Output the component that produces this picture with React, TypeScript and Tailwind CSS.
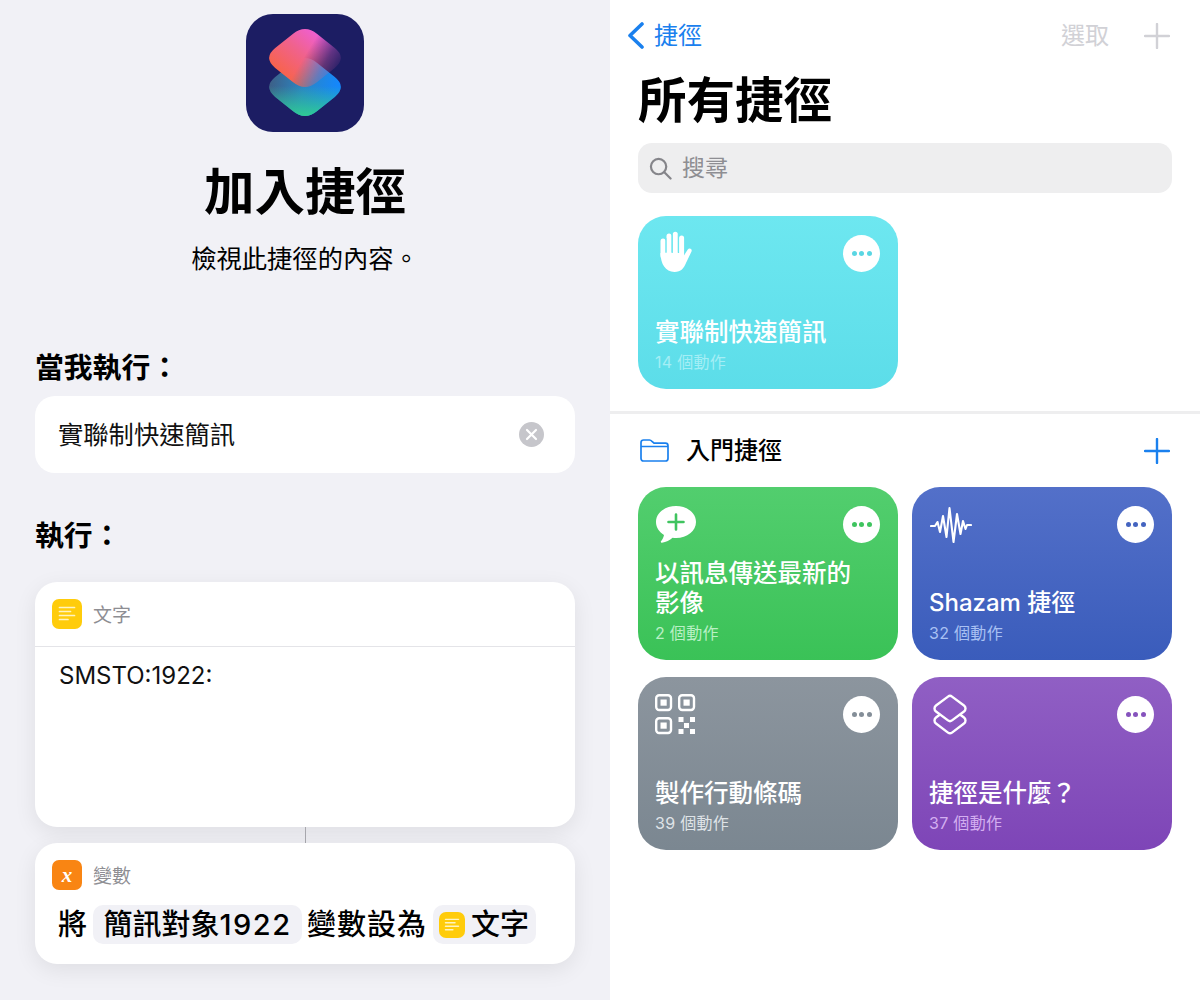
import React from "react";

const FONT = "font-['Inter','Noto_Sans_CJK_TC',sans-serif]";

const DIAMOND =
  "M46.8 19.9Q59 10 71.2 19.9L88.8 34.1Q101 44 88.8 53.9L71.2 68.1Q59 78 46.8 68.1L29.2 53.9Q17 44 29.2 34.1Z";
const DIAMOND_LOW =
  "M46.8 48.9Q59 39 71.2 48.9L88.8 63.1Q101 73 88.8 82.9L71.2 97.1Q59 107 46.8 97.1L29.2 82.9Q17 73 29.2 63.1Z";

function AppIcon() {
  return (
    <div className="w-[118px] h-[118px] rounded-[27px] bg-[#1c1d63] overflow-hidden">
      <svg width="118" height="118" viewBox="0 0 118 118">
        <defs>
          <linearGradient id="botA" gradientUnits="userSpaceOnUse" x1="24" y1="62" x2="92" y2="70">
            <stop offset="0" stopColor="#3d5f86" />
            <stop offset="0.5" stopColor="#2a86c4" />
            <stop offset="1" stopColor="#1587fb" />
          </linearGradient>
          <linearGradient id="botB" gradientUnits="userSpaceOnUse" x1="59" y1="72" x2="59" y2="102">
            <stop offset="0" stopColor="#2fc79a" stopOpacity="0" />
            <stop offset="1" stopColor="#2fcb93" stopOpacity="1" />
          </linearGradient>
          <linearGradient id="topA" gradientUnits="userSpaceOnUse" x1="32" y1="58" x2="68" y2="16">
            <stop offset="0" stopColor="#f8634a" />
            <stop offset="0.55" stopColor="#f0628e" />
            <stop offset="1" stopColor="#ef5fd2" />
          </linearGradient>
          <linearGradient id="fade" gradientUnits="userSpaceOnUse" x1="60" y1="40" x2="90" y2="58">
            <stop offset="0" stopColor="#fff" />
            <stop offset="0.6" stopColor="#555" />
            <stop offset="1" stopColor="#111" />
          </linearGradient>
          <mask id="topMask" maskUnits="userSpaceOnUse" x="0" y="0" width="118" height="118">
            <rect width="118" height="118" fill="url(#fade)" />
          </mask>
        </defs>
        <path d={DIAMOND_LOW} fill="url(#botA)" />
        <path d={DIAMOND_LOW} fill="url(#botB)" />
        <path d={DIAMOND} fill="url(#topA)" mask="url(#topMask)" />
      </svg>
    </div>
  );
}

function NotesGlyph({ size }: { size: number }) {
  return (
    <div
      className="bg-[#ffcc0b] flex items-center justify-center shrink-0 rounded-[7px]"
      style={{ width: size, height: size }}
    >
      <svg width={size} height={size} viewBox="0 0 30 30">
        <g stroke="#fff4c2" strokeWidth="1.7" strokeLinecap="round">
          <path d="M7.5 8.5H22.5" />
          <path d="M7.5 12.5H18.5" />
          <path d="M7.5 16.5H22.5" />
          <path d="M7.5 20.5H16" />
        </g>
      </svg>
    </div>
  );
}

function Plus({ color, size = 26 }: { color: string; size?: number }) {
  return (
    <svg width={size} height={size} viewBox="0 0 26 26" className="shrink-0">
      <path d="M13 1V25M1 13H25" stroke={color} strokeWidth="2.4" strokeLinecap="round" />
    </svg>
  );
}

function Dots({ color }: { color: string }) {
  return (
    <div className="w-[37px] h-[37px] rounded-full bg-white flex items-center justify-center gap-[2.5px] shrink-0 mt-[1px]">
      <span className="w-[5px] h-[5px] rounded-full" style={{ background: color }} />
      <span className="w-[5px] h-[5px] rounded-full" style={{ background: color }} />
      <span className="w-[5px] h-[5px] rounded-full" style={{ background: color }} />
    </div>
  );
}

function HandIcon() {
  return (
    <svg width="42" height="42" viewBox="0 0 42 42">
      <path
        d="M5.5 22C5.5 32 10 41 19.5 41C26 41 29 37 31 32L36.5 20.5C37.6 18 34.2 16.4 32.6 18.8L29 24.5V22H5.5Z"
        fill="#fff"
      />
      <g stroke="#fff" strokeWidth="5" strokeLinecap="round">
        <path d="M8 25V10" />
        <path d="M14 25V5" />
        <path d="M20.3 25V3.2" />
        <path d="M26.6 27V7" />
      </g>
      <g stroke="#6ce6ef" strokeWidth="0.9">
        <path d="M11 7V21" />
        <path d="M17.1 3V21" />
        <path d="M23.4 3V21" />
      </g>
    </svg>
  );
}

function BubbleIcon() {
  return (
    <svg width="42" height="40" viewBox="0 0 42 40">
      <path
        d="M21 1C9.7 1 1 8 1 17C1 22.6 4.3 27.2 9 29.9C8.6 32.4 7.3 34.6 6 36.2C5.5 37 6 37.9 7 37.7C11 37.1 14.8 35.3 17.6 32.8C18.7 33 19.8 33 21 33C32.3 33 41 25.8 41 17C41 8 32.3 1 21 1Z"
        fill="#fff"
      />
      <path d="M21 9.5V24.5M13.5 17H28.5" stroke="#3fc45f" strokeWidth="2.6" strokeLinecap="round" />
    </svg>
  );
}

function WaveIcon() {
  return (
    <svg width="42" height="40" viewBox="0 0 42 40">
      <path
        d="M1 21H5L7.5 17L10 27L13 11L16.5 32L19.5 3L23.5 37L27 9L30.5 29L33 16L35.5 24L37 20H41"
        fill="none"
        stroke="#fff"
        strokeWidth="2.1"
        strokeLinecap="round"
        strokeLinejoin="round"
      />
    </svg>
  );
}

function QrIcon() {
  const Box = ({ x, y }: { x: number; y: number }) => (
    <g>
      <rect x={x + 1.2} y={y + 1.2} width="14.8" height="14.8" rx="3" fill="none" stroke="#fff" strokeWidth="2.4" />
      <rect x={x + 5.5} y={y + 5.5} width="6.2" height="6.2" fill="#fff" />
    </g>
  );
  return (
    <svg width="42" height="42" viewBox="0 0 42 42">
      <Box x={0} y={0} />
      <Box x={23} y={0} />
      <Box x={0} y={23} />
      <g fill="#fff">
        <rect x="23.5" y="23" width="5" height="5" />
        <rect x="35" y="23" width="5" height="5" />
        <rect x="29" y="29" width="5" height="5" />
        <rect x="23.5" y="35" width="5" height="5" />
        <rect x="35" y="35" width="5" height="5" />
      </g>
    </svg>
  );
}

function LayersIcon() {
  return (
    <svg width="42" height="42" viewBox="0 0 42 42" fill="none" stroke="#fff" strokeWidth="2.4" strokeLinejoin="round">
      <path d="M19 2.6C20.2 1.7 21.8 1.7 23 2.6L35 11.5C37 13 37 16 35 17.5L23 26.4C21.8 27.3 20.2 27.3 19 26.4L7 17.5C5 16 5 13 7 11.5L19 2.6Z" />
      <path d="M11 20.5L7 23.5C5 25 5 28 7 29.5L19 38.6C20.2 39.5 21.8 39.5 23 38.6L35 29.5C37 28 37 25 35 23.5L31 20.5" />
    </svg>
  );
}

function ShortcutCard({
  bg,
  icon,
  title,
  sub,
  subColor,
  dot,
  iconPad,
  titleSize = "text-[24.5px]",
}: {
  bg: string;
  icon: React.ReactNode;
  title: React.ReactNode;
  sub: string;
  subColor: string;
  dot: string;
  iconPad: string;
  titleSize?: string;
}) {
  return (
    <div className={`h-[173px] rounded-[28px] pl-[17px] pr-[18px] pt-[18px] pb-[16px] flex flex-col justify-between ${bg}`}>
      <div className="flex justify-between items-start h-[42px]">
        <div className={iconPad}>{icon}</div>
        <Dots color={dot} />
      </div>
      <div>
        <div className={`${titleSize} leading-[30px] font-medium text-white`}>{title}</div>
        <div className={`text-[16px] leading-[22px] mt-[4px] tracking-[0.3px] ${subColor}`}>{sub}</div>
      </div>
    </div>
  );
}

export default function App() {
  return (
    <div className={`w-[1200px] h-[1000px] flex overflow-hidden bg-white ${FONT}`}>
      {/* Left */}
      <div className="w-[610px] h-full bg-[#f1f1f6] flex flex-col items-stretch pt-[14px] px-[35px]">
        <div className="flex flex-col items-center">
          <AppIcon />
          <h1 className="text-[50.5px] leading-[60px] font-bold text-black mt-[30px]">加入捷徑</h1>
          <p className="text-[25.3px] leading-[32px] text-black mt-[21px]">檢視此捷徑的內容。</p>
        </div>
        <div className="text-[28.8px] leading-[36px] font-semibold text-black mt-[75px]">當我執行：</div>
        <div className="h-[77px] rounded-[20px] bg-white mt-[10px] flex items-center justify-between pl-[23px] pr-[31px] shrink-0">
          <span className="text-[25.3px] text-[#111]">實聯制快速簡訊</span>
          <span className="w-[25px] h-[25px] rounded-full bg-[#c6c6cb] flex items-center justify-center">
            <svg width="13" height="13" viewBox="0 0 13 13">
              <path d="M2 2L11 11M11 2L2 11" stroke="#fff" strokeWidth="2.2" strokeLinecap="round" />
            </svg>
          </span>
        </div>
        <div className="text-[28.8px] leading-[36px] font-semibold text-black mt-[45px]">執行：</div>
        <div className="h-[245px] rounded-[22px] bg-white mt-[28px] shadow-[0_6px_22px_rgba(0,0,0,0.08)] shrink-0">
          <div className="h-[65px] border-b border-[#e4e4e8] pl-[17px] flex items-center gap-[11px]">
            <NotesGlyph size={30} />
            <span className="text-[19px] text-[#8e8e93] pt-[4px]">文字</span>
          </div>
          <div className="pl-[24px] pt-[12px] text-[24px] leading-[33px] text-[#111]">SMSTO:1922:</div>
        </div>
        <div className="h-[16px] w-px bg-[#a8a8ae] mx-auto shrink-0"></div>
        <div className="h-[121px] rounded-[22px] bg-white shadow-[0_6px_22px_rgba(0,0,0,0.08)] shrink-0 pl-[17px] pt-[17px]">
          <div className="flex items-center gap-[11px] h-[30px]">
            <span className="w-[30px] h-[30px] rounded-[7px] bg-[#f98513] flex items-center justify-center text-white font-bold italic text-[21px] leading-none font-['Liberation_Serif',serif]">
              x
            </span>
            <span className="text-[19px] text-[#8e8e93] pt-[4px]">變數</span>
          </div>
          <div className="flex items-center mt-[15px] text-[29px] leading-[39px] font-medium text-black pl-[6px]">
            <span>將</span>
            <span className="ml-[6px] h-[39px] w-[209px] rounded-[10px] bg-[#f1f1f6] flex items-center justify-center whitespace-nowrap">
              簡訊對象<span className="tracking-[1.5px]">1922</span>
            </span>
            <span className="ml-[5px] w-[121px] whitespace-nowrap tracking-[1px]">變數設為</span>
            <span className="ml-[5px] h-[39px] w-[103px] rounded-[10px] bg-[#f1f1f6] flex items-center pl-[6px] gap-[6px] whitespace-nowrap">
              <NotesGlyph size={26} />
              文字
            </span>
          </div>
        </div>
      </div>

      {/* Right */}
      <div className="w-[590px] h-full bg-white flex flex-col">
        <div className="h-[71px] pl-[17px] pr-[30px] flex items-center justify-between shrink-0">
          <div className="flex items-center gap-[10px]">
            <svg width="17" height="27" viewBox="0 0 17 27">
              <path d="M15 2L3 13.5L15 25" fill="none" stroke="#1a80ee" strokeWidth="3.6" strokeLinecap="round" strokeLinejoin="round" />
            </svg>
            <span className="text-[24px] text-[#1a80ee]">捷徑</span>
          </div>
          <div className="flex items-center gap-[35px]">
            <span className="text-[24px] text-[#d1d1d6]">選取</span>
            <Plus color="#d1d1d6" />
          </div>
        </div>
        <div className="px-[28px]">
          <h2 className="text-[48.5px] leading-[58px] font-bold text-black mt-[1px]">所有捷徑</h2>
          <div className="h-[50px] mt-[13px] rounded-[14px] bg-[#eeeeef] flex items-center pl-[11px] gap-[10px]">
            <svg width="23" height="23" viewBox="0 0 24 24" fill="none" stroke="#85858a" strokeWidth="2.3" strokeLinecap="round">
              <circle cx="10" cy="10" r="8" />
              <path d="M16 16L22.5 22.5" />
            </svg>
            <span className="text-[23px] text-[#8e8e93]">搜尋</span>
          </div>
          <div className="w-[260px] mt-[23px]">
            <ShortcutCard
              bg="bg-gradient-to-b from-[#6de7f0] to-[#5cdde9]"
              icon={<HandIcon />}
              title="實聯制快速簡訊"
              sub="14 個動作"
              subColor="text-[#a4eef5]"
              dot="#5ad6e3"
              iconPad="-mt-[3px]"
            />
          </div>
        </div>
        <div className="h-[3px] bg-[#eeeeef] mt-[22px] shrink-0"></div>
        <div className="h-[73px] pl-[30px] pr-[30px] flex items-center justify-between shrink-0">
          <div className="flex items-center gap-[17px]">
            <svg width="29" height="23" viewBox="0 0 29 23" fill="none" stroke="#1a80ee" strokeWidth="1.7" strokeLinejoin="round">
              <path d="M1 7V3.5C1 2 2 1 3.5 1H9.5C10.5 1 11.2 1.5 12 2.3L14 4.2H25.5C27 4.2 28 5.2 28 6.7V19.5C28 21 27 22 25.5 22H3.5C2 22 1 21 1 19.5V7ZM1 7.5H28" />
            </svg>
            <span className="text-[24px] font-medium text-black">入門捷徑</span>
          </div>
          <Plus color="#1a80ee" />
        </div>
        <div className="px-[28px] grid grid-cols-[260px_260px] gap-x-[14px] gap-y-[17px]">
          <ShortcutCard
            bg="bg-gradient-to-b from-[#52ce6e] to-[#3ac257]"
            icon={<BubbleIcon />}
            title={
              <>
                以訊息傳送最新的
                <br />
                影像
              </>
            }
            sub="2 個動作"
            subColor="text-[#b9f0c5]"
            dot="#3fc45f"
            iconPad=""
          />
          <ShortcutCard
            bg="bg-gradient-to-b from-[#5370c9] to-[#3a5cbb]"
            icon={<WaveIcon />}
            title="Shazam 捷徑"
            titleSize="text-[24px]"
            sub="32 個動作"
            subColor="text-[#a9c1f3]"
            dot="#4464c0"
            iconPad="ml-[1px]"
          />
          <ShortcutCard
            bg="bg-gradient-to-b from-[#8c959e] to-[#7b8791]"
            icon={<QrIcon />}
            title="製作行動條碼"
            sub="39 個動作"
            subColor="text-[#dfe3e7]"
            dot="#848e98"
            iconPad="-mt-[1px]"
          />
          <ShortcutCard
            bg="bg-gradient-to-b from-[#905fc4] to-[#7e45b7]"
            icon={<LayersIcon />}
            title="捷徑是什麼？"
            sub="37 個動作"
            subColor="text-[#d3aef0]"
            dot="#8653bd"
            iconPad="-mt-[1px]"
          />
        </div>
      </div>
    </div>
  );
}
